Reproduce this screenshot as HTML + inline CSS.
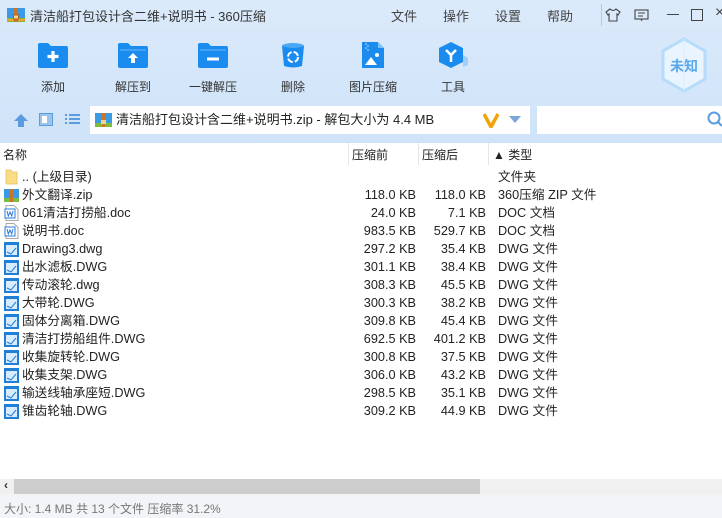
<!DOCTYPE html>
<html><head><meta charset="utf-8">
<style>
*{margin:0;padding:0;box-sizing:border-box}
body{width:722px;height:518px;overflow:hidden;position:relative;font-family:"Liberation Sans","Noto Sans CJK SC",sans-serif;font-size:12px;color:#222;background:#fff}
.top{position:absolute;left:0;top:0;width:722px;height:143px;background:linear-gradient(#dbeafb,#cfe3f8)}
.abs{position:absolute}
.title{left:30px;top:6px;font-size:13px;color:#333}
.menu{top:6px;font-size:13px;color:#444}
.tb{position:absolute;top:42px;width:70px;text-align:center;font-size:12px;color:#333}
.tb svg{display:block;margin:0 auto 9px}
.addr{left:90px;top:106px;width:440px;height:28px;background:#fff}
.search{left:537px;top:106px;width:185px;height:28px;background:#fff}
.hdr{position:absolute;top:143px;left:0;width:722px;height:22px;background:#fff;font-size:12px}
.hdr span{position:absolute;top:0;line-height:24px}
.sep{position:absolute;top:0;width:1px;height:22px;background:#e3e6ea}
.row{position:absolute;left:0;width:722px;height:18px;font-size:12.7px;line-height:18px}
.row span{position:absolute;top:0;line-height:18px;height:18px;white-space:nowrap}
.row .n{left:22px}
.row .a{right:306px}
.row .b{right:236px}
.row .t{left:498px}
.ic{position:absolute;left:4px;top:1px;width:15px;height:16px}
</style></head><body>
<div class="top"></div>
<svg class="abs" style="left:7px;top:7px" width="18" height="16"><rect x="0" y="1" width="18" height="14" fill="#3b9ae6"/><rect x="0" y="11" width="18" height="4" fill="#7dbb3c"/><rect x="0" y="12" width="18" height="2" fill="#f0a030"/><rect x="7" y="1" width="4" height="14" fill="#c8762a"/><rect x="6.5" y="8" width="5" height="4" fill="#f6d28a" stroke="#b06020" stroke-width="1"/></svg>
<div class="abs title">清洁船打包设计含二维+说明书 - 360压缩</div>
<div class="abs menu" style="left:391px">文件</div>
<div class="abs menu" style="left:443px">操作</div>
<div class="abs menu" style="left:495px">设置</div>
<div class="abs menu" style="left:547px">帮助</div>
<div class="abs" style="left:601px;top:4px;width:1px;height:22px;background:#b8c8da"></div>
<svg class="abs" style="left:605px;top:8px" width="16" height="14"><path d="M5 1 L1 4 L3 7 L4 6 L4 13 L12 13 L12 6 L13 7 L15 4 L11 1 Q8 4 5 1Z" fill="none" stroke="#444" stroke-width="1.1"/></svg>
<svg class="abs" style="left:634px;top:9px" width="16" height="13"><rect x="1" y="1" width="13" height="9" fill="none" stroke="#444" stroke-width="1.1"/><path d="M4 4h7M4 7h5M7 10l1 2" stroke="#444" fill="none"/></svg>
<div class="abs" style="left:667px;top:14px;width:12px;height:1px;background:#444"></div>
<div class="abs" style="left:691px;top:9px;width:12px;height:12px;border:1.2px solid #444"></div>
<div class="abs" style="left:715px;top:4px;font-size:16px;color:#444">×</div>

<div class="tb" style="left:18px"><svg width="32" height="27"><path d="M1 3 Q1 1 3 1 L11 1 L14 4 L29 4 Q31 4 31 6 L31 24 Q31 26 29 26 L3 26 Q1 26 1 24Z" fill="#1a8cf0"/><path d="M16 9v11M10.5 14.5h11" stroke="#fff" stroke-width="3.2"/></svg>添加</div>
<div class="tb" style="left:98px"><svg width="32" height="27"><path d="M1 3 Q1 1 3 1 L11 1 L14 4 L29 4 Q31 4 31 6 L31 24 Q31 26 29 26 L3 26 Q1 26 1 24Z" fill="#1a8cf0"/><path d="M3 8h26" stroke="#6bb8f8"/><path d="M16 11l-5 5h3v5h4v-5h3z" fill="#fff"/></svg>解压到</div>
<div class="tb" style="left:178px"><svg width="32" height="27"><path d="M1 3 Q1 1 3 1 L11 1 L14 4 L29 4 Q31 4 31 6 L31 24 Q31 26 29 26 L3 26 Q1 26 1 24Z" fill="#1a8cf0"/><path d="M3 8h26" stroke="#6bb8f8"/><path d="M10 17h12" stroke="#fff" stroke-width="3"/></svg>一键解压</div>
<div class="tb" style="left:258px"><svg width="26" height="27"><ellipse cx="13" cy="4" rx="11" ry="3" fill="#4aa8f4"/><path d="M2 4 L4 24 Q13 27 22 24 L24 4 Q13 8 2 4Z" fill="#1a8cf0"/><circle cx="13" cy="15" r="5" fill="none" stroke="#fff" stroke-width="2" stroke-dasharray="6 2"/></svg>删除</div>
<div class="tb" style="left:338px"><svg width="26" height="27"><path d="M2 0 L18 0 L24 6 L24 26 L2 26Z" fill="#1a8cf0"/><path d="M18 0 L18 6 L24 6" fill="#7cc2fa"/><path d="M5 2h2M7 4h2M5 6h2M7 8h2" stroke="#bfe0fc"/><circle cx="17" cy="13" r="2" fill="#fff"/><path d="M5 23 L11 15 L17 23Z" fill="#fff"/></svg>图片压缩</div>
<div class="tb" style="left:418px"><svg width="32" height="27"><path d="M14 0 L26 6 L26 20 L14 26 L2 20 L2 6Z" fill="#1a8cf0"/><path d="M26 13 L31 16 L31 23 L26 25Z" fill="#9fd0fa"/><path d="M9 8 L14 13 L19 8 M14 13 V20" stroke="#fff" stroke-width="2.5" fill="none"/></svg>工具</div>
<svg class="abs" style="left:661px;top:37px" width="46" height="56"><path d="M23 2 L44 14 L44 42 L23 54 L2 42 L2 14Z" fill="#eaf4fe" stroke="#b5dcfa" stroke-width="3"/><path d="M23 2 L23 54" stroke="#d8ecfd"/></svg>
<div class="abs" style="left:670px;top:56px;font-size:14px;font-weight:bold;color:#5aa8ec">未知</div>

<svg class="abs" style="left:13px;top:113px" width="16" height="15"><path d="M8 1 L15 8 L11 8 L11 14 L5 14 L5 8 L1 8Z" fill="#5b9be0"/></svg>
<svg class="abs" style="left:39px;top:113px" width="14" height="13"><rect x="0.5" y="0.5" width="13" height="12" fill="#9cc3ec" stroke="#5b9be0"/><rect x="3" y="3" width="5" height="7" fill="#fff"/></svg>
<svg class="abs" style="left:65px;top:113px" width="15" height="13"><path d="M0 2h2M4 2h11M0 6h2M4 6h11M0 10h2M4 10h11" stroke="#5b9be0" stroke-width="2"/></svg>
<div class="abs addr"></div>
<svg class="abs" style="left:95px;top:112px" width="17" height="16"><rect x="0" y="1" width="17" height="14" fill="#3b9ae6"/><rect x="0" y="11" width="17" height="4" fill="#7dbb3c"/><rect x="7" y="1" width="3" height="14" fill="#c8762a"/><rect x="6" y="8" width="5" height="4" fill="#f6d28a"/></svg>
<div class="abs" style="left:116px;top:111px;font-size:13px;line-height:18px">清洁船打包设计含二维+说明书.zip - 解包大小为 4.4 MB</div>
<svg class="abs" style="left:483px;top:113px" width="16" height="15"><path d="M1 1 L8 14 L15 1" stroke="#f5a20a" stroke-width="3.5" fill="none"/></svg>
<svg class="abs" style="left:509px;top:116px" width="12" height="8"><path d="M0 0h12L6 7z" fill="#7aa6d8"/></svg>
<div class="abs search"></div>
<svg class="abs" style="left:707px;top:111px" width="15" height="17"><circle cx="7" cy="7" r="5.5" fill="none" stroke="#5b9be0" stroke-width="2"/><path d="M11 11l4 4" stroke="#5b9be0" stroke-width="2"/></svg>

<div class="hdr"><span style="left:3px">名称</span><div class="sep" style="left:348px"></div><span style="left:352px">压缩前</span><div class="sep" style="left:418px"></div><span style="left:422px">压缩后</span><div class="sep" style="left:488px"></div><span style="left:493px">▲ 类型</span></div>

<div class="row" style="top:168px"><svg class="ic" viewBox="0 0 15 16"><path d="M2 1h5l1 2h5v12H2z" fill="#f9dc83" stroke="#e5c060" stroke-width=".8"/></svg><span class="n">.. (上级目录)</span><span class="t">文件夹</span></div>
<div class="row" style="top:186px"><svg class="ic" viewBox="0 0 15 16"><rect x="0" y="2" width="15" height="13" fill="#3b9ae6"/><rect x="0" y="11" width="15" height="4" fill="#7dbb3c"/><rect x="6" y="2" width="3" height="13" fill="#c8762a"/></svg><span class="n">外文翻译.zip</span><span class="a">118.0 KB</span><span class="b">118.0 KB</span><span class="t">360压缩 ZIP 文件</span></div>
<div class="row" style="top:204px"><svg class="ic" viewBox="0 0 15 16"><path d="M2 .5h8l4 4v11H2z" fill="#fff" stroke="#aaa"/><rect x="1" y="4" width="10" height="9" fill="#fff" stroke="#2a7ad8"/><path d="M3 6l1.3 5 1.7-4 1.7 4L9 6" stroke="#2a7ad8" fill="none"/></svg><span class="n">061清洁打捞船.doc</span><span class="a">24.0 KB</span><span class="b">7.1 KB</span><span class="t">DOC 文档</span></div>
<div class="row" style="top:222px"><svg class="ic" viewBox="0 0 15 16"><path d="M2 .5h8l4 4v11H2z" fill="#fff" stroke="#aaa"/><rect x="1" y="4" width="10" height="9" fill="#fff" stroke="#2a7ad8"/><path d="M3 6l1.3 5 1.7-4 1.7 4L9 6" stroke="#2a7ad8" fill="none"/></svg><span class="n">说明书.doc</span><span class="a">983.5 KB</span><span class="b">529.7 KB</span><span class="t">DOC 文档</span></div>
<div class="row" style="top:240px"><svg class="ic" viewBox="0 0 15 16"><rect x="0" y="1" width="15" height="15" fill="#1f7fd8"/><rect x="2" y="4" width="11" height="10" fill="#d8ecff"/><path d="M3 11l4 2 5-6" stroke="#1f7fd8" fill="none"/></svg><span class="n">Drawing3.dwg</span><span class="a">297.2 KB</span><span class="b">35.4 KB</span><span class="t">DWG 文件</span></div>
<div class="row" style="top:258px"><svg class="ic" viewBox="0 0 15 16"><rect x="0" y="1" width="15" height="15" fill="#1f7fd8"/><rect x="2" y="4" width="11" height="10" fill="#d8ecff"/><path d="M3 11l4 2 5-6" stroke="#1f7fd8" fill="none"/></svg><span class="n">出水滤板.DWG</span><span class="a">301.1 KB</span><span class="b">38.4 KB</span><span class="t">DWG 文件</span></div>
<div class="row" style="top:276px"><svg class="ic" viewBox="0 0 15 16"><rect x="0" y="1" width="15" height="15" fill="#1f7fd8"/><rect x="2" y="4" width="11" height="10" fill="#d8ecff"/><path d="M3 11l4 2 5-6" stroke="#1f7fd8" fill="none"/></svg><span class="n">传动滚轮.dwg</span><span class="a">308.3 KB</span><span class="b">45.5 KB</span><span class="t">DWG 文件</span></div>
<div class="row" style="top:294px"><svg class="ic" viewBox="0 0 15 16"><rect x="0" y="1" width="15" height="15" fill="#1f7fd8"/><rect x="2" y="4" width="11" height="10" fill="#d8ecff"/><path d="M3 11l4 2 5-6" stroke="#1f7fd8" fill="none"/></svg><span class="n">大带轮.DWG</span><span class="a">300.3 KB</span><span class="b">38.2 KB</span><span class="t">DWG 文件</span></div>
<div class="row" style="top:312px"><svg class="ic" viewBox="0 0 15 16"><rect x="0" y="1" width="15" height="15" fill="#1f7fd8"/><rect x="2" y="4" width="11" height="10" fill="#d8ecff"/><path d="M3 11l4 2 5-6" stroke="#1f7fd8" fill="none"/></svg><span class="n">固体分离箱.DWG</span><span class="a">309.8 KB</span><span class="b">45.4 KB</span><span class="t">DWG 文件</span></div>
<div class="row" style="top:330px"><svg class="ic" viewBox="0 0 15 16"><rect x="0" y="1" width="15" height="15" fill="#1f7fd8"/><rect x="2" y="4" width="11" height="10" fill="#d8ecff"/><path d="M3 11l4 2 5-6" stroke="#1f7fd8" fill="none"/></svg><span class="n">清洁打捞船组件.DWG</span><span class="a">692.5 KB</span><span class="b">401.2 KB</span><span class="t">DWG 文件</span></div>
<div class="row" style="top:348px"><svg class="ic" viewBox="0 0 15 16"><rect x="0" y="1" width="15" height="15" fill="#1f7fd8"/><rect x="2" y="4" width="11" height="10" fill="#d8ecff"/><path d="M3 11l4 2 5-6" stroke="#1f7fd8" fill="none"/></svg><span class="n">收集旋转轮.DWG</span><span class="a">300.8 KB</span><span class="b">37.5 KB</span><span class="t">DWG 文件</span></div>
<div class="row" style="top:366px"><svg class="ic" viewBox="0 0 15 16"><rect x="0" y="1" width="15" height="15" fill="#1f7fd8"/><rect x="2" y="4" width="11" height="10" fill="#d8ecff"/><path d="M3 11l4 2 5-6" stroke="#1f7fd8" fill="none"/></svg><span class="n">收集支架.DWG</span><span class="a">306.0 KB</span><span class="b">43.2 KB</span><span class="t">DWG 文件</span></div>
<div class="row" style="top:384px"><svg class="ic" viewBox="0 0 15 16"><rect x="0" y="1" width="15" height="15" fill="#1f7fd8"/><rect x="2" y="4" width="11" height="10" fill="#d8ecff"/><path d="M3 11l4 2 5-6" stroke="#1f7fd8" fill="none"/></svg><span class="n">输送线轴承座短.DWG</span><span class="a">298.5 KB</span><span class="b">35.1 KB</span><span class="t">DWG 文件</span></div>
<div class="row" style="top:402px"><svg class="ic" viewBox="0 0 15 16"><rect x="0" y="1" width="15" height="15" fill="#1f7fd8"/><rect x="2" y="4" width="11" height="10" fill="#d8ecff"/><path d="M3 11l4 2 5-6" stroke="#1f7fd8" fill="none"/></svg><span class="n">锥齿轮轴.DWG</span><span class="a">309.2 KB</span><span class="b">44.9 KB</span><span class="t">DWG 文件</span></div>

<div class="abs" style="left:0;top:479px;width:722px;height:15px;background:#f0f0f0"></div>
<div class="abs" style="left:14px;top:479px;width:466px;height:15px;background:#cdcdcd"></div>
<div class="abs" style="left:4px;top:478px;font-size:12px;font-weight:bold;color:#333">‹</div>
<div class="abs" style="left:0;top:494px;width:722px;height:24px;background:#f3f4f8"></div>
<div class="abs" style="left:4px;top:500px;font-size:12px;color:#777">大小: 1.4 MB 共 13 个文件 压缩率 31.2%</div>
</body></html>
